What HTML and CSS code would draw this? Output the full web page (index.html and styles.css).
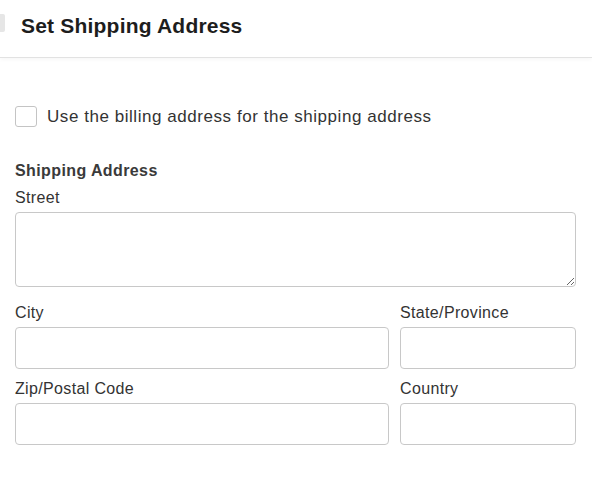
FILE: index.html
```html
<!DOCTYPE html>
<html lang="en">
<head>
  <meta charset="UTF-8" />
  <title>Set Shipping Address</title>
  <link rel="stylesheet" href="styles.css">
</head>
<body>
  <div class="modal">
    <div class="modal-header">
      <span class="close-mark"></span>
      <h2>Set Shipping Address</h2>
    </div>

    <div class="modal-body">
      <label class="check-row">
        <input type="checkbox" class="check" />
        <span>Use the billing address for the shipping address</span>
      </label>

      <h3>Shipping Address</h3>

      <div class="field">
        <label for="street">Street</label>
        <textarea id="street"></textarea>
      </div>

      <div class="row">
        <div class="field wide">
          <label for="city">City</label>
          <input type="text" id="city" />
        </div>
        <div class="field narrow">
          <label for="state">State/Province</label>
          <input type="text" id="state" />
        </div>
      </div>

      <div class="row">
        <div class="field wide">
          <label for="zip">Zip/Postal Code</label>
          <input type="text" id="zip" />
        </div>
        <div class="field narrow">
          <label for="country">Country</label>
          <input type="text" id="country" />
        </div>
      </div>
    </div>
  </div>
</body>
</html>
```

FILE: styles.css
```css
* {
  box-sizing: border-box;
  margin: 0;
  padding: 0;
}

body {
  font-family: 'Liberation Sans', Arial, sans-serif;
  background: #fff;
  color: #333;
}

.modal-header {
  position: relative;
  height: 58px;
  padding: 13px 21px 0;
  border-bottom: 1px solid #e2e2e2;
  box-shadow: 0 2px 4px rgba(0, 0, 0, 0.03);
}

.close-mark {
  position: absolute;
  left: -4px;
  top: 14px;
  width: 9px;
  height: 18px;
  border-radius: 2px;
  background: #e6e6e6;
}

h2 {
  font-size: 21px;
  font-weight: bold;
  color: #1d1d1d;
  line-height: 26px;
  letter-spacing: 0.2px;
}

.modal-body {
  padding: 47px 16px 0 15px;
}

.check-row {
  display: flex;
  align-items: center;
  gap: 10px;
  font-size: 17px;
  letter-spacing: 0.55px;
  color: #333;
}

.check-row span {
  padding-top: 2px;
}

.check {
  appearance: none;
  width: 22px;
  height: 21px;
  border: 1px solid #c4c4c4;
  border-radius: 3px;
  background: #fff;
}

h3 {
  margin-top: 34px;
  font-size: 16px;
  font-weight: bold;
  color: #3a3a3a;
  line-height: 19px;
  letter-spacing: 0.4px;
}

.field label {
  display: block;
  font-size: 16px;
  line-height: 19px;
  letter-spacing: 0.35px;
  margin: 8px 0 5px;
  color: #333;
}

textarea,
.field input {
  display: block;
  width: 100%;
  border: 1px solid #c8c8c8;
  border-radius: 4px;
  background: #fff;
  font: inherit;
}

textarea {
  height: 75px;
  resize: vertical;
}

.field input {
  height: 42px;
}

.row {
  display: flex;
  gap: 11px;
}

.row .field label {
  margin-top: 16px;
}

.row + .row .field label {
  margin-top: 10px;
}

.wide {
  flex: 1;
}

.narrow {
  width: 176px;
}
```
